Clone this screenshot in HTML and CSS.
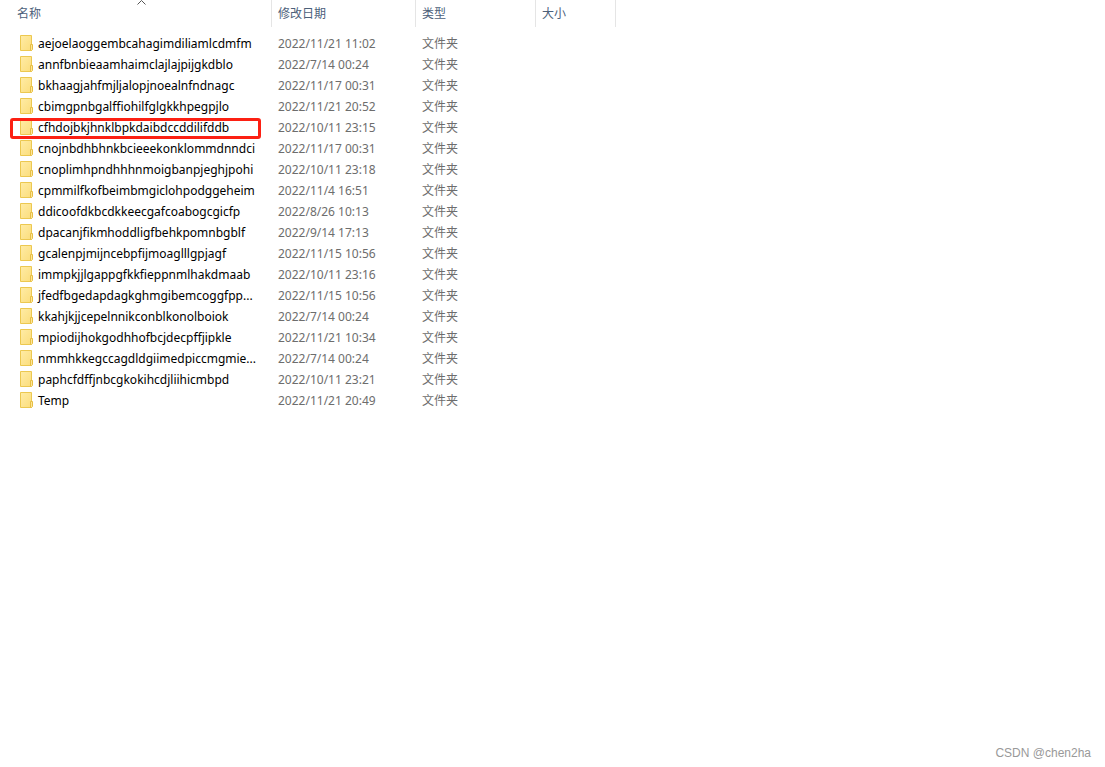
FILE: index.html
```html
<!DOCTYPE html>
<html lang="zh-CN">
<head>
    <meta charset="UTF-8">
    <title>Extensions</title>
    <link rel="stylesheet" href="styles.css">
</head>
<body>
    <svg class="defs" aria-hidden="true">
        <defs>
            <linearGradient id="fill" x1="0" y1="0" x2="1" y2="1">
                <stop offset="0" stop-color="#ffeca6"/>
                <stop offset="1" stop-color="#fbdd7c"/>
            </linearGradient>
        </defs>
        <symbol id="folder" viewBox="0 0 13 16">
            <path d="M0.5 0.5H11.5V15.5H0.5Z" fill="url(#fill)" stroke="#ecc850"/>
            <path d="M10.5 15.5V9.5H12.5V14.5L11.5 15.5Z" fill="#ffe596" stroke="#e6bf45"/>
        </symbol>
    </svg>

    <main class="explorer">
        <table class="files">
            <thead>
                <tr>
                    <th class="col-name">
                        <button type="button">名称</button>
                        <svg class="sort" viewBox="0 0 9 5" aria-hidden="true"><path d="M0.5 4.5L4.5 0.5L8.5 4.5"/></svg>
                    </th>
                    <th class="col-date"><button type="button">修改日期</button></th>
                    <th class="col-type"><button type="button">类型</button></th>
                    <th class="col-size"><button type="button">大小</button></th>
                </tr>
            </thead>
            <tbody id="fileList"></tbody>
        </table>
    </main>
    <footer class="watermark">CSDN @chen2ha</footer>

    <script src="files.js"></script>
</body>
</html>
```
FILE: styles.css
```css
body {
    margin: 0;
    min-height: 100vh;
    display: flex;
    flex-direction: column;
    background: white;
    color: #000;
    font-family: "Noto Sans", "Noto Sans CJK SC", sans-serif;
    font-size: 12px;
}
.defs {
    position: absolute;
    width: 0;
    height: 0;
}
.explorer {
    flex: 1;
}
.files {
    table-layout: fixed;
    width: 616px;
    border-collapse: separate;
    border-spacing: 0;
}
.files th {
    position: relative;
    box-sizing: border-box;
    height: 27px;
    padding: 0 0 0 6px;
    border-right: 1px solid #e5e5e5;
    text-align: left;
    vertical-align: middle;
}
.files .col-name {
    width: 272px;
    padding-left: 17px;
}
.col-date {
    width: 144px;
}
.col-type {
    width: 120px;
}
.col-size {
    width: 80px;
}
.files th button {
    display: block;
    padding: 0;
    border: none;
    background: none;
    color: #4c607a;
    font: inherit;
    font-weight: normal;
    line-height: 26px;
    cursor: pointer;
}
.sort {
    position: absolute;
    top: 0;
    left: 137px;
    width: 9px;
    height: 5px;
    fill: none;
    stroke: #555;
}
.files tbody::before {
    content: "";
    display: block;
    height: 6px;
}
.files td {
    height: 21px;
    padding: 0 0 0 6px;
    color: #6d6d6d;
    line-height: 21px;
    white-space: nowrap;
}
.files .name {
    position: relative;
    padding-left: 20px;
}
.name a {
    display: flex;
    align-items: flex-start;
    gap: 5px;
    color: #000;
    text-decoration: none;
}
.folder {
    width: 13px;
    height: 16px;
    margin-top: 2px;
    flex: none;
}
.marked .name::after {
    content: "";
    position: absolute;
    top: 1px;
    left: 10px;
    right: 11px;
    height: 15px;
    border: 3px solid #fc2013;
    border-radius: 3px;
    pointer-events: none;
}
.watermark {
    padding: 0 14px 5px;
    color: #999;
    font-family: "Liberation Sans", Arial, sans-serif;
    font-size: 12px;
    line-height: 18px;
    text-align: right;
}
```
FILE: files.js
```js
const files = [
    ["aejoelaoggembcahagimdiliamlcdmfm", "2022/11/21 11:02"],
    ["annfbnbieaamhaimclajlajpijgkdblo", "2022/7/14 00:24"],
    ["bkhaagjahfmjljalopjnoealnfndnagc", "2022/11/17 00:31"],
    ["cbimgpnbgalffiohilfglgkkhpegpjlo", "2022/11/21 20:52"],
    ["cfhdojbkjhnklbpkdaibdccddilifddb", "2022/10/11 23:15"],
    ["cnojnbdhbhnkbcieeekonklommdnndci", "2022/11/17 00:31"],
    ["cnoplimhpndhhhnmoigbanpjeghjpohi", "2022/10/11 23:18"],
    ["cpmmilfkofbeimbmgiclohpodggeheim", "2022/11/4 16:51"],
    ["ddicoofdkbcdkkeecgafcoabogcgicfp", "2022/8/26 10:13"],
    ["dpacanjfikmhoddligfbehkpomnbgblf", "2022/9/14 17:13"],
    ["gcalenpjmijncebpfijmoaglllgpjagf", "2022/11/15 10:56"],
    ["immpkjjlgappgfkkfieppnmlhakdmaab", "2022/10/11 23:16"],
    ["jfedfbgedapdagkghmgibemcoggfpp...", "2022/11/15 10:56"],
    ["kkahjkjjcepelnnikconblkonolboiok", "2022/7/14 00:24"],
    ["mpiodijhokgodhhofbcjdecpffjipkle", "2022/11/21 10:34"],
    ["nmmhkkegccagdldgiimedpiccmgmie...", "2022/7/14 00:24"],
    ["paphcfdffjnbcgkokihcdjliihicmbpd", "2022/10/11 23:21"],
    ["Temp", "2022/11/21 20:49"]
];
const marked = "cfhdojbkjhnklbpkdaibdccddilifddb";

const list = document.getElementById("fileList");

files.forEach(function([name, date]) {
    let row = list.insertRow();
    if (name === marked) {
        row.classList.add("marked");
    }

    let nameCell = row.insertCell();
    nameCell.className = "name";
    nameCell.innerHTML = '<a href="#"><svg class="folder" aria-hidden="true"><use href="#folder"/></svg><span></span></a>';
    nameCell.querySelector("span").innerText = name;

    row.insertCell().innerText = date;
    row.insertCell().innerText = "文件夹";
    row.insertCell();
});
```
